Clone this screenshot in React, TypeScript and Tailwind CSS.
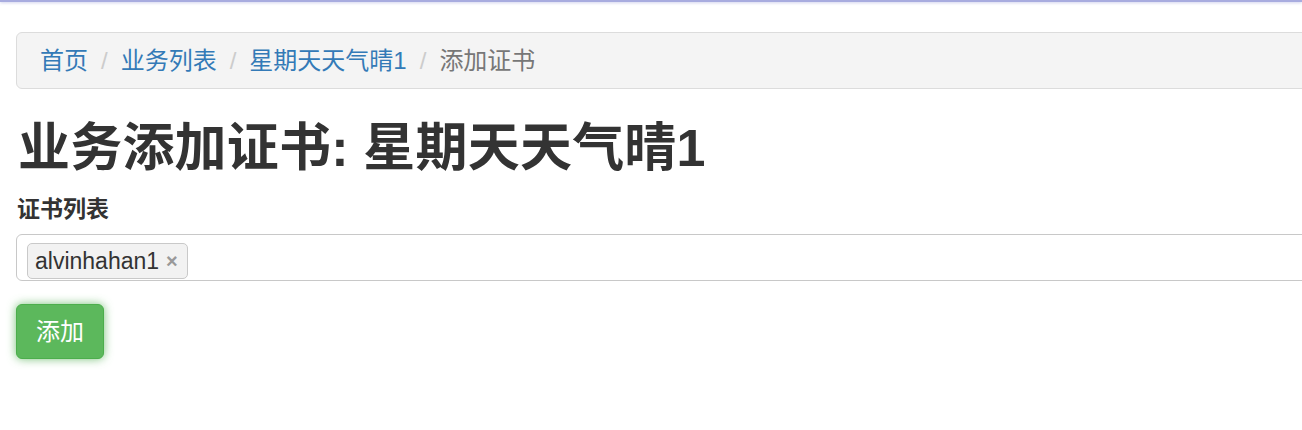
export default function App() {
  const crumbs = ["首页", "业务列表", "星期天天气晴1"];

  return (
    <div
      className="relative h-[430px] w-[1302px] overflow-hidden bg-white text-[#333]"
      style={{ fontFamily: '"Liberation Sans", "Noto Sans CJK SC", sans-serif' }}
    >
      {/* top bar line */}
      <div className="h-[2px] bg-[#a8acdf] shadow-[0_1px_3px_rgba(168,172,223,0.6)]" />

      <div className="w-[1420px] pl-4">
        {/* breadcrumb */}
        <div className="mt-[30px] flex h-[57px] items-center rounded-[6px] border border-[#dcdcdc] bg-[#f4f4f4] px-[23px] text-[24px] leading-8">
          {crumbs.map((c) => (
            <div key={c} className="flex items-center">
              <span className="text-[#337ab7]">{c}</span>
              <span className="px-[13px] text-[#ccc]">/</span>
            </div>
          ))}
          <span className="text-[#777]">添加证书</span>
        </div>

        {/* heading */}
        <h1 className="mt-[31px] pl-[2px] text-[52px] font-bold leading-[57px] tracking-[0.2px]">
          业务添加证书: 星期天天气晴1
        </h1>

        {/* form */}
        <label className="mt-[16px] block pl-[1px] text-[23px] font-bold leading-8">证书列表</label>
        <div className="mt-[9px] flex h-[47px] items-start rounded-[6px] border border-[#c8c8c8] bg-white pl-[10px] pt-[8px]">
          <div className="flex h-[36px] items-center rounded-[5px] border border-[#c9c9c9] bg-[#f2f2f2] pl-[7px] pr-[9px] text-[23px] text-[#333]">
            <span>alvinhahan1</span>
            <span className="ml-[7px] text-[20px] font-bold text-[#999]">×</span>
          </div>
        </div>

        <button className="mt-[23px] flex h-[55px] w-[88px] items-center justify-center rounded-[6px] border border-[#4cae4c] bg-[#5cb85c] text-[24px] text-white shadow-[0_0_10px_rgba(76,174,76,0.75)]">
          添加
        </button>
      </div>
    </div>
  );
}
